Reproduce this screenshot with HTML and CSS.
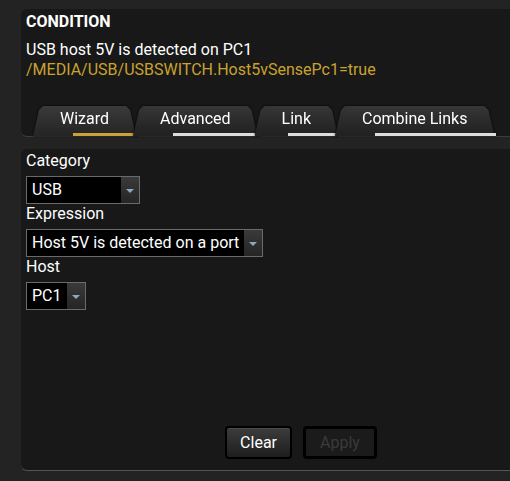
FILE: index.html
```html
<!DOCTYPE html>
<html lang="en">
<head>
  <meta charset="UTF-8" />
  <title>Condition</title>
  <link rel="stylesheet" href="styles.css">
</head>
<body>

  <!-- Condition summary -->
  <div class="cond">
    <div class="cond-title">CONDITION</div>
    <div class="cond-text">USB host 5V is detected on PC1</div>
    <div class="cond-path">/MEDIA/USB/USBSWITCH.Host5vSensePc1=true</div>

    <div class="tabs">
      <div class="tab active">Wizard</div>
      <div class="tab">Advanced</div>
      <div class="tab tab-short">Link</div>
      <div class="tab">Combine Links</div>
    </div>
  </div>

  <!-- Wizard -->
  <div class="wizard">
    <div class="label">Category</div>
    <div class="select sel-category">
      <span class="value">USB</span>
      <span class="arrow"></span>
    </div>

    <div class="label">Expression</div>
    <div class="select sel-expression">
      <span class="value">Host 5V is detected on a port</span>
      <span class="arrow"></span>
    </div>

    <div class="label">Host</div>
    <div class="select sel-host">
      <span class="value">PC1</span>
      <span class="arrow"></span>
    </div>

    <div class="actions">
      <button class="btn">Clear</button>
      <button class="btn" disabled>Apply</button>
    </div>
  </div>

</body>
</html>
```

FILE: styles.css
```css
body {
  margin: 0; padding: 9px 0 0 21px;
  background: #232323; color: #fff;
  font-family: Roboto, "Liberation Sans", sans-serif; font-size: 16px;
  overflow: hidden;
}

/* condition panel */
.cond {
  height: 124px;
  display: flex; flex-direction: column;
  padding: 3px 0 0 5px;
  background: #181818;
  border-radius: 6px 0 0 6px;
  border-bottom: 1px solid #3c3c3c;
}
.cond-title { font-weight: bold; line-height: 20px; margin-bottom: 8px; }
.cond-text, .cond-path { line-height: 20px; }
.cond-path { color: #c9a230; }

/* tabs */
.tabs { display: flex; margin: auto 0 0 7px; height: 30px; }
.tab {
  position: relative; height: 30px;
  padding: 0 27px; margin-left: -3px;
  line-height: 25px; white-space: nowrap;
  filter: drop-shadow(0 0 1px #000);
}
.tab:first-child { margin-left: 0; }
.tab::before {
  content: ""; position: absolute; inset: 0; z-index: -1;
  background: linear-gradient(#363636, #222 90%);
  clip-path: polygon(0 100%, 6px 4px, 10px 0, calc(100% - 10px) 0, calc(100% - 6px) 4px, 100% 100%);
}
.tab::after {
  content: ""; position: absolute;
  left: 40px; right: -2px; bottom: 0; height: 3px;
  background: #ddd;
}
.tab-short::after { left: 33px; right: 0; }
.tab.active::after { background: #c9a33a; }
.tab.active::before { background: linear-gradient(#3a3a3a, #262626 90%); }

/* wizard panel */
.wizard {
  height: 319px;
  margin-top: 12px;
  display: flex; flex-direction: column; align-items: flex-start;
  padding: 2px 0 0 5px;
  background: #181818;
  border-radius: 6px 0 0 6px;
  border-bottom: 1px solid #555;
}
.label { line-height: 20px; }

.select {
  display: flex; height: 26px; margin-top: 5px;
  border: 1px solid #6a6a6a; background: #000;
}
.select .value { padding: 0 5px; line-height: 26px; white-space: nowrap; }
.sel-category .value { width: 84px; }
.select .arrow {
  position: relative; width: 18px;
  background: linear-gradient(#3a3a3a, #252525);
}
.select .arrow::after {
  content: ""; position: absolute; left: 5px; top: 12px;
  border: 4px solid transparent; border-top: 4px solid #8ea7c6;
  border-bottom: 0;
}

/* buttons */
.actions {
  align-self: stretch; margin-top: auto; margin-bottom: 11px;
  padding-left: 66px;
  display: flex; justify-content: center; gap: 11px;
}
.btn {
  height: 33px; padding: 0 13px;
  font: 16px Roboto, "Liberation Sans", sans-serif; color: #fff;
  border: 2px solid #000; border-radius: 4px;
  background: linear-gradient(#3c3c3c, #1e1e1e);
  box-shadow: inset 0 1px 0 #4a4a4a;
}
.btn:disabled {
  color: #3a3a3a; border-width: 3px; padding: 0 14px;
  background: #1b1b1b; box-shadow: none;
}
```
